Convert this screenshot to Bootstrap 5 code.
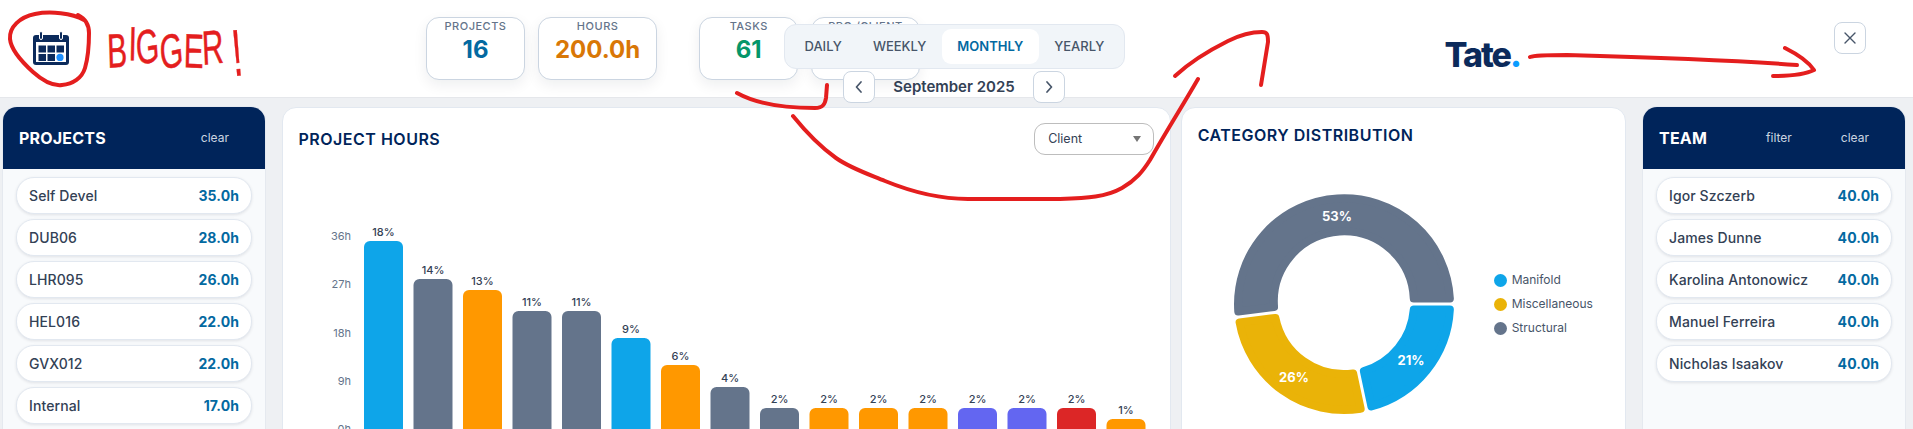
<!DOCTYPE html>
<html lang="en">
<head>
<meta charset="utf-8">
<title>Timesheet dashboard</title>
<link href="https://cdn.jsdelivr.net/npm/bootstrap@5.3.0/dist/css/bootstrap.min.css" rel="stylesheet">
<style>
html,body{height:429px;overflow:hidden}
body{font-family:Inter,"Liberation Sans",sans-serif;background:#eef0f3;color:#334155;position:relative}
.top-bar{height:98px;background:#fff;border-bottom:1px solid #e5e7eb;padding-left:33px;padding-right:47px}
.cal-icon{width:36px;height:35px;margin-top:31px;flex:none}
.stat-group{margin-left:357px;margin-top:17px;gap:13px}
.stat-box{height:63px;min-width:99px;padding:1px 16px 0;background:#fff;border:1px solid #cbd5e1;border-radius:13px;box-shadow:0 5px 14px rgba(15,23,42,.07);text-align:center}
.stat-box.spaced{margin-left:29px}
.stat-label{font-size:11px;line-height:14px;letter-spacing:.5px;color:#64748b;font-weight:500}
.stat-value{font-size:24px;line-height:34px;font-weight:700}
.tone-blue{color:#0369a1}.tone-amber{color:#d97706}.tone-green{color:#059669}
.brand-mark{margin-left:auto;margin-top:33px;font-size:34px;line-height:44px;height:44px;font-weight:800;letter-spacing:-2px;color:#0b2a5b}
.brand-mark span{color:#0a9cff}
.close-box{width:32px;height:32px;margin-left:314px;margin-top:22px;padding:0;background:#fff;border:1px solid #cbd5e1;border-radius:8px;color:#475569}
.period-tabs{position:absolute;left:784px;top:24px;width:341px;height:45px;padding:4px;background:#f1f5f9;border:1px solid #e2e8f0;border-radius:12px}
.period-tab{padding:0 15.5px;border:0;background:none;border-radius:9px;font-size:13px;font-weight:500;color:#475569;line-height:35px}
.period-tab.is-on{background:#fff;color:#0369a1;font-weight:600}
.period-nav{position:absolute;left:843px;top:71px;width:222px}
.nav-box{width:32px;height:32px;padding:0;background:#fff;border:1px solid #cbd5e1;border-radius:8px;color:#475569}
.nav-month{font-size:15px;font-weight:600;color:#334155}
.board{padding:9px 8px 0 3px;gap:17.5px;height:400px}
.side-panel{width:262px;flex:none;background:#f8fafc;box-shadow:0 0 0 1px #e5e9ef;border-radius:14px 14px 0 0;overflow:hidden}
.side-head{height:62px;background:#00245a;padding:0 20px 0 16px;color:#fff}
.side-title{font-size:16px;font-weight:700;letter-spacing:.2px;margin-right:auto}
.side-act{font-size:12px;color:#cbd5e1;padding:0 16px;border:0;background:none}
.side-act+.side-act{margin-left:17px}
.side-list{padding:8px 13px;gap:5px}
.side-row{height:37px;padding:0 12px;background:#fff;border:1px solid #e2e8f0;border-radius:18px;box-shadow:0 1px 3px rgba(15,23,42,.1);font-size:14px;letter-spacing:.1px;font-weight:500;color:#334155}
.side-row b{font-size:14px;font-weight:700;color:#0369a1}
.mid-grid{flex:1;display:grid;grid-template-columns:2fr 1fr;gap:9.5px;min-width:0;margin-left:-1px}
.pane{background:#fff;border:1px solid #e2e8f0;border-radius:14px;padding:15px 16px 16px;overflow:hidden}
.pane-title{font-size:16px;line-height:24px;font-weight:600;letter-spacing:.5px;color:#00245a;margin:0}
.pick-wrap{position:relative;width:120px}
.pick-wrap::after{content:"";position:absolute;right:13px;top:13px;border-style:solid;border-width:6px 4.5px 0;border-color:#757575 transparent transparent;pointer-events:none}
.grp-select{display:block;width:100%;height:32px;padding:0 13px;appearance:none;background:#fff;border:1px solid #bdbdbd;border-radius:11px;font-size:12.5px;color:#334155}
.bar-chart{display:block;margin:6px -16px 0;width:889px;height:270px;font-family:Inter,"Liberation Sans",sans-serif}
.pie-wrap{margin:4px -16px 0}
.pie-chart{display:block;width:312px;height:306px;flex:none;font-family:Inter,"Liberation Sans",sans-serif}
.pie-key{gap:8px;font-size:12px;line-height:16px;color:#475569}
.key-dot{width:13px;height:13px;border-radius:50%;margin-right:5px}
.ink-layer{position:absolute;left:0;top:0;width:1913px;height:429px;pointer-events:none}
.ink-line{fill:none;stroke:#e41e1e;stroke-width:4;stroke-linecap:round;stroke-linejoin:round}
.ink-text{font-family:"Liberation Sans",sans-serif;fill:#e41e1e;stroke:#e41e1e;stroke-width:.5}
</style>
</head>
<body>
<header class="top-bar d-flex align-items-start">
  <svg class="cal-icon" viewBox="0 0 36 35" aria-hidden="true">
    <rect y="4" width="36" height="30" rx="3" fill="#0b2a5b"/>
    <rect x="3" y="11" width="30" height="20" fill="#fff"/>
    <g fill="#0b2a5b">
      <rect x="5.5" y="14.5" width="7.5" height="7"/><rect x="14.5" y="14.5" width="7.5" height="7"/><rect x="23.5" y="14.5" width="7.5" height="7"/>
      <rect x="5.5" y="23" width="7.5" height="7"/><rect x="14.5" y="23" width="7.5" height="7"/>
      <rect x="6.5" y=".5" width="3" height="8" rx="1.5" stroke="#fff"/><rect x="26.5" y=".5" width="3" height="8" rx="1.5" stroke="#fff"/>
    </g>
    <circle cx="27" cy="26.4" r="3.6" fill="#1e90ff"/>
  </svg>
  <div class="stat-group d-flex">
    <div class="stat-box"><div class="stat-label">PROJECTS</div><div class="stat-value tone-blue">16</div></div>
    <div class="stat-box"><div class="stat-label">HOURS</div><div class="stat-value tone-amber">200.0h</div></div>
    <div class="stat-box spaced"><div class="stat-label">TASKS</div><div class="stat-value tone-green">61</div></div>
    <div class="stat-box"><div class="stat-label">PRO./CLIENT</div><div class="stat-value tone-blue">4</div></div>
  </div>
  <div class="brand-mark">Tate<span>.</span></div>
  <button class="close-box d-flex align-items-center justify-content-center" type="button" aria-label="Close">
    <svg width="14" height="14" viewBox="0 0 14 14"><path d="M2 2l10 10M12 2L2 12" stroke="currentColor" stroke-width="1.4" stroke-linecap="round"/></svg>
  </button>
</header>

<div class="period-tabs d-flex">
  <button class="period-tab" type="button">DAILY</button>
  <button class="period-tab" type="button">WEEKLY</button>
  <button class="period-tab is-on" type="button">MONTHLY</button>
  <button class="period-tab" type="button">YEARLY</button>
</div>
<div class="period-nav d-flex align-items-center justify-content-between">
  <button class="nav-box d-flex align-items-center justify-content-center" type="button" aria-label="Previous"><svg width="10" height="14" viewBox="0 0 10 14"><path d="M7 2L2.5 7 7 12" fill="none" stroke="currentColor" stroke-width="1.7" stroke-linecap="round" stroke-linejoin="round"/></svg></button>
  <span class="nav-month">September 2025</span>
  <button class="nav-box d-flex align-items-center justify-content-center" type="button" aria-label="Next"><svg width="10" height="14" viewBox="0 0 10 14"><path d="M3 2l4.5 5L3 12" fill="none" stroke="currentColor" stroke-width="1.7" stroke-linecap="round" stroke-linejoin="round"/></svg></button>
</div>

<main class="board d-flex">
  <aside class="side-panel">
    <div class="side-head d-flex align-items-center"><span class="side-title">PROJECTS</span><button class="side-act" type="button">clear</button></div>
    <div class="side-list d-flex flex-column">
      <div class="side-row d-flex align-items-center justify-content-between"><span>Self Devel</span><b>35.0h</b></div>
      <div class="side-row d-flex align-items-center justify-content-between"><span>DUB06</span><b>28.0h</b></div>
      <div class="side-row d-flex align-items-center justify-content-between"><span>LHR095</span><b>26.0h</b></div>
      <div class="side-row d-flex align-items-center justify-content-between"><span>HEL016</span><b>22.0h</b></div>
      <div class="side-row d-flex align-items-center justify-content-between"><span>GVX012</span><b>22.0h</b></div>
      <div class="side-row d-flex align-items-center justify-content-between"><span>Internal</span><b>17.0h</b></div>
    </div>
  </aside>

  <div class="mid-grid">
    <section class="pane">
      <div class="d-flex align-items-center justify-content-between">
        <h2 class="pane-title">PROJECT HOURS</h2>
        <span class="pick-wrap"><select class="grp-select"><option>Client</option></select></span>
      </div>
      <svg class="bar-chart" viewBox="283 160 889 270" role="img" aria-label="Project hours by project">
        <g font-size="11" fill="#64748b" text-anchor="end">
          <text x="351" y="239">36h</text><text x="351" y="287">27h</text><text x="351" y="336">18h</text><text x="351" y="384">9h</text><text x="351" y="432">0h</text>
        </g>
        <g>
          <rect x="364" y="240" width="39" height="210" rx="6" fill="#0ea5e9"/>
          <rect x="413.5" y="278" width="39" height="170" rx="6" fill="#64748b"/>
          <rect x="463" y="289" width="39" height="160" rx="6" fill="#ff9800"/>
          <rect x="512.5" y="310" width="39" height="140" rx="6" fill="#64748b"/>
          <rect x="562" y="310" width="39" height="140" rx="6" fill="#64748b"/>
          <rect x="611.5" y="337" width="39" height="110" rx="6" fill="#0ea5e9"/>
          <rect x="661" y="364" width="39" height="90" rx="6" fill="#ff9800"/>
          <rect x="710.5" y="386" width="39" height="60" rx="6" fill="#64748b"/>
          <rect x="760" y="407" width="39" height="40" rx="6" fill="#64748b"/>
          <rect x="809.5" y="407" width="39" height="40" rx="6" fill="#ff9800"/>
          <rect x="859" y="407" width="39" height="40" rx="6" fill="#ff9800"/>
          <rect x="908.5" y="407" width="39" height="40" rx="6" fill="#ff9800"/>
          <rect x="958" y="407" width="39" height="40" rx="6" fill="#6366f1"/>
          <rect x="1007.5" y="407" width="39" height="40" rx="6" fill="#6366f1"/>
          <rect x="1057" y="407" width="39" height="40" rx="6" fill="#dc2626"/>
          <rect x="1106.5" y="418" width="39" height="30" rx="6" fill="#ff9800"/>
        </g>
        <g font-size="11" font-weight="500" fill="#334155" text-anchor="middle">
          <text x="383.5" y="235">18%</text><text x="433" y="273">14%</text><text x="482.5" y="284">13%</text><text x="532" y="305">11%</text><text x="581.5" y="305">11%</text><text x="631" y="332">9%</text><text x="680.5" y="359">6%</text><text x="730" y="381">4%</text><text x="779.5" y="402">2%</text><text x="829" y="402">2%</text><text x="878.5" y="402">2%</text><text x="928" y="402">2%</text><text x="977.5" y="402">2%</text><text x="1027" y="402">2%</text><text x="1076.5" y="402">2%</text><text x="1126" y="413">1%</text>
        </g>
      </svg>
    </section>

    <section class="pane">
      <h2 class="pane-title">CATEGORY DISTRIBUTION</h2>
      <div class="pie-wrap d-flex align-items-center">
        <svg class="pie-chart" viewBox="1182 150 312 306" role="img" aria-label="Category distribution">
          <g id="pieSlices" transform="translate(1344 303)" stroke-width="8" stroke-linejoin="round"></g>
          <g font-size="13" font-weight="700" fill="#fff" text-anchor="middle">
            <text x="1337" y="220">53%</text><text x="1411" y="364">21%</text><text x="1294" y="381">26%</text>
          </g>
        </svg>
        <div class="pie-key d-flex flex-column">
          <div class="d-flex align-items-center"><span class="key-dot" style="background:#0ea5e9"></span>Manifold</div>
          <div class="d-flex align-items-center"><span class="key-dot" style="background:#eab308"></span>Miscellaneous</div>
          <div class="d-flex align-items-center"><span class="key-dot" style="background:#64748b"></span>Structural</div>
        </div>
      </div>
    </section>
  </div>

  <aside class="side-panel">
    <div class="side-head d-flex align-items-center"><span class="side-title">TEAM</span><button class="side-act" type="button">filter</button><button class="side-act" type="button">clear</button></div>
    <div class="side-list d-flex flex-column">
      <div class="side-row d-flex align-items-center justify-content-between"><span>Igor Szczerb</span><b>40.0h</b></div>
      <div class="side-row d-flex align-items-center justify-content-between"><span>James Dunne</span><b>40.0h</b></div>
      <div class="side-row d-flex align-items-center justify-content-between"><span>Karolina Antonowicz</span><b>40.0h</b></div>
      <div class="side-row d-flex align-items-center justify-content-between"><span>Manuel Ferreira</span><b>40.0h</b></div>
      <div class="side-row d-flex align-items-center justify-content-between"><span>Nicholas Isaakov</span><b>40.0h</b></div>
    </div>
  </aside>
</main>

<svg class="ink-layer" viewBox="0 0 1913 429">
  <path class="ink-line" d="M84 20C72 13 50 11 35 14C20 17 9 27 10 39C11 50 22 62 33 72C43 81 54 86 62 85C73 84 82 78 85 68C88 58 89 45 89 33C89 25 86 19 78 15"/>
  <g class="ink-text" font-size="48">
    <text transform="scale(.62 1)" x="174 207 221 260 296 327" y="68 60 65 70 67 65" rotate="-3 2 -6 -8 2 -4">BIGGER</text>
    <text transform="translate(234 76) rotate(-5) scale(.55 1)" font-size="66">!</text>
  </g>
  <path class="ink-line" d="M737 93C755 103 780 108 815 108C823 108 825 104 826 98L827 85"/>
  <path class="ink-line" d="M793 116C810 137 822 148 836 158C850 168 868 174 885 181C912 192 940 199 968 199L1060 199C1088 198 1106 197 1122 188C1136 180 1143 171 1150 160C1170 125 1180 110 1198 79"/>
  <path class="ink-line" d="M1175 76C1190 62 1210 50 1228 41C1240 35 1252 32 1262 32C1267 32 1268 34 1268 42L1261 85"/>
  <path class="ink-line" d="M1530 57C1535 55 1550 55 1567 55C1640 57 1730 60 1797 65"/>
  <path class="ink-line" d="M1785 48C1795 53 1808 61 1814 70C1806 74 1790 76 1773 76"/>
</svg>

<script src="https://cdn.jsdelivr.net/npm/bootstrap@5.3.0/dist/js/bootstrap.bundle.min.js"></script>
<script>
(function(){
  var R=106,r=70,d=5.5,g=document.getElementById('pieSlices');
  function pt(rad,deg){var a=deg*Math.PI/180;return (rad*Math.sin(a)).toFixed(2)+' '+(-rad*Math.cos(a)).toFixed(2);}
  [[90,168,'#0ea5e9'],[168,263,'#eab308'],[263,450,'#64748b']].forEach(function(s){
    var oi=Math.asin(d/R)*180/Math.PI,ii=Math.asin(d/r)*180/Math.PI;
    var large=(s[1]-s[0]-2*oi)>180?1:0;
    var p='M'+pt(R,s[0]+oi)+'A'+R+' '+R+' 0 '+large+' 1 '+pt(R,s[1]-oi)+'L'+pt(r,s[1]-ii)+'A'+r+' '+r+' 0 '+large+' 0 '+pt(r,s[0]+ii)+'Z';
    var el=document.createElementNS('http://www.w3.org/2000/svg','path');
    el.setAttribute('d',p);el.setAttribute('fill',s[2]);el.setAttribute('stroke',s[2]);g.appendChild(el);
  });
})();
</script>
</body>
</html>
